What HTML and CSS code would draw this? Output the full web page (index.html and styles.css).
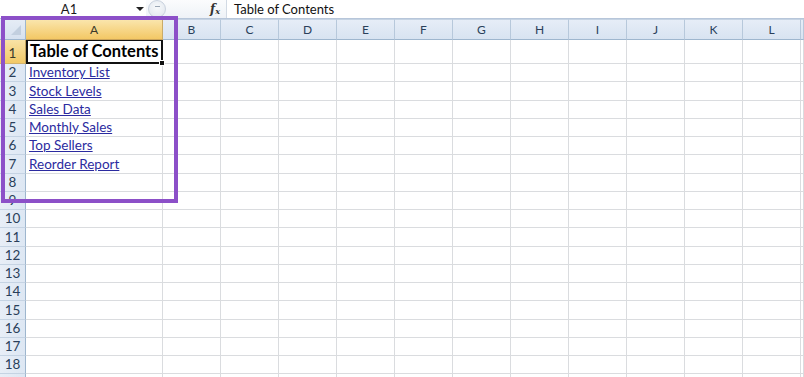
FILE: index.html
```html
<!DOCTYPE html>
<html>
<head>
<meta charset="utf-8">
<link rel="stylesheet" href="styles.css">
</head>
<body>
<div class="app">
  <div class="fbar">
    <div class="namebox"><span class="nm">A1</span><span class="drop"></span></div>
    <div class="fmid"><span class="knob"></span><span class="fx">f<sub>x</sub></span></div>
    <div class="finput">Table of Contents</div>
  </div>
  <div class="sheet">
    <div class="row hdr">
      <div class="rh corner"><span class="tri"></span></div>
      <div class="ch a sel">A</div><div class="ch">B</div><div class="ch">C</div><div class="ch">D</div><div class="ch">E</div><div class="ch">F</div><div class="ch">G</div><div class="ch">H</div><div class="ch">I</div><div class="ch">J</div><div class="ch">K</div><div class="ch">L</div><div class="ch rest"></div>
    </div>
    <div class="row r1">
      <div class="rh sel">1</div>
      <div class="c a active"><b class="title">Table of Contents</b><span class="handle"></span></div><div class="c"></div><div class="c"></div><div class="c"></div><div class="c"></div><div class="c"></div><div class="c"></div><div class="c"></div><div class="c"></div><div class="c"></div><div class="c"></div><div class="c"></div><div class="c rest"></div>
    </div>
    <div class="row"><div class="rh">2</div><div class="c a"><a class="lnk" href="#">Inventory List</a></div><div class="c"></div><div class="c"></div><div class="c"></div><div class="c"></div><div class="c"></div><div class="c"></div><div class="c"></div><div class="c"></div><div class="c"></div><div class="c"></div><div class="c"></div><div class="c rest"></div></div>
    <div class="row"><div class="rh">3</div><div class="c a"><a class="lnk" href="#">Stock Levels</a></div><div class="c"></div><div class="c"></div><div class="c"></div><div class="c"></div><div class="c"></div><div class="c"></div><div class="c"></div><div class="c"></div><div class="c"></div><div class="c"></div><div class="c"></div><div class="c rest"></div></div>
    <div class="row"><div class="rh">4</div><div class="c a"><a class="lnk" href="#">Sales Data</a></div><div class="c"></div><div class="c"></div><div class="c"></div><div class="c"></div><div class="c"></div><div class="c"></div><div class="c"></div><div class="c"></div><div class="c"></div><div class="c"></div><div class="c"></div><div class="c rest"></div></div>
    <div class="row"><div class="rh">5</div><div class="c a"><a class="lnk" href="#">Monthly Sales</a></div><div class="c"></div><div class="c"></div><div class="c"></div><div class="c"></div><div class="c"></div><div class="c"></div><div class="c"></div><div class="c"></div><div class="c"></div><div class="c"></div><div class="c"></div><div class="c rest"></div></div>
    <div class="row"><div class="rh">6</div><div class="c a"><a class="lnk" href="#">Top Sellers</a></div><div class="c"></div><div class="c"></div><div class="c"></div><div class="c"></div><div class="c"></div><div class="c"></div><div class="c"></div><div class="c"></div><div class="c"></div><div class="c"></div><div class="c"></div><div class="c rest"></div></div>
    <div class="row"><div class="rh">7</div><div class="c a"><a class="lnk" href="#">Reorder Report</a></div><div class="c"></div><div class="c"></div><div class="c"></div><div class="c"></div><div class="c"></div><div class="c"></div><div class="c"></div><div class="c"></div><div class="c"></div><div class="c"></div><div class="c"></div><div class="c rest"></div></div>
    <div class="row"><div class="rh">8</div><div class="c a"></div><div class="c"></div><div class="c"></div><div class="c"></div><div class="c"></div><div class="c"></div><div class="c"></div><div class="c"></div><div class="c"></div><div class="c"></div><div class="c"></div><div class="c"></div><div class="c rest"></div></div>
    <div class="row"><div class="rh">9</div><div class="c a"></div><div class="c"></div><div class="c"></div><div class="c"></div><div class="c"></div><div class="c"></div><div class="c"></div><div class="c"></div><div class="c"></div><div class="c"></div><div class="c"></div><div class="c"></div><div class="c rest"></div></div>
    <div class="row"><div class="rh">10</div><div class="c a"></div><div class="c"></div><div class="c"></div><div class="c"></div><div class="c"></div><div class="c"></div><div class="c"></div><div class="c"></div><div class="c"></div><div class="c"></div><div class="c"></div><div class="c"></div><div class="c rest"></div></div>
    <div class="row"><div class="rh">11</div><div class="c a"></div><div class="c"></div><div class="c"></div><div class="c"></div><div class="c"></div><div class="c"></div><div class="c"></div><div class="c"></div><div class="c"></div><div class="c"></div><div class="c"></div><div class="c"></div><div class="c rest"></div></div>
    <div class="row"><div class="rh">12</div><div class="c a"></div><div class="c"></div><div class="c"></div><div class="c"></div><div class="c"></div><div class="c"></div><div class="c"></div><div class="c"></div><div class="c"></div><div class="c"></div><div class="c"></div><div class="c"></div><div class="c rest"></div></div>
    <div class="row"><div class="rh">13</div><div class="c a"></div><div class="c"></div><div class="c"></div><div class="c"></div><div class="c"></div><div class="c"></div><div class="c"></div><div class="c"></div><div class="c"></div><div class="c"></div><div class="c"></div><div class="c"></div><div class="c rest"></div></div>
    <div class="row"><div class="rh">14</div><div class="c a"></div><div class="c"></div><div class="c"></div><div class="c"></div><div class="c"></div><div class="c"></div><div class="c"></div><div class="c"></div><div class="c"></div><div class="c"></div><div class="c"></div><div class="c"></div><div class="c rest"></div></div>
    <div class="row"><div class="rh">15</div><div class="c a"></div><div class="c"></div><div class="c"></div><div class="c"></div><div class="c"></div><div class="c"></div><div class="c"></div><div class="c"></div><div class="c"></div><div class="c"></div><div class="c"></div><div class="c"></div><div class="c rest"></div></div>
    <div class="row"><div class="rh">16</div><div class="c a"></div><div class="c"></div><div class="c"></div><div class="c"></div><div class="c"></div><div class="c"></div><div class="c"></div><div class="c"></div><div class="c"></div><div class="c"></div><div class="c"></div><div class="c"></div><div class="c rest"></div></div>
    <div class="row"><div class="rh">17</div><div class="c a"></div><div class="c"></div><div class="c"></div><div class="c"></div><div class="c"></div><div class="c"></div><div class="c"></div><div class="c"></div><div class="c"></div><div class="c"></div><div class="c"></div><div class="c"></div><div class="c rest"></div></div>
    <div class="row"><div class="rh">18</div><div class="c a"></div><div class="c"></div><div class="c"></div><div class="c"></div><div class="c"></div><div class="c"></div><div class="c"></div><div class="c"></div><div class="c"></div><div class="c"></div><div class="c"></div><div class="c"></div><div class="c rest"></div></div>
    <div class="row"><div class="rh"></div><div class="c a"></div><div class="c"></div><div class="c"></div><div class="c"></div><div class="c"></div><div class="c"></div><div class="c"></div><div class="c"></div><div class="c"></div><div class="c"></div><div class="c"></div><div class="c"></div><div class="c rest"></div></div>
  </div>
  <div class="highlight"></div>
</div>
</body>
</html>
```

FILE: styles.css
```css
* { box-sizing: border-box; }
html, body { margin: 0; padding: 0; background: #fff; }
body { width: 804px; height: 377px; overflow: hidden; font-family: Lato, "Open Sans", sans-serif; }
.app { position: relative; width: 804px; height: 377px; overflow: hidden; }

.fbar { display: flex; height: 19px; border-bottom: 1px solid #b7c6da; background: #fff; }
.namebox { width: 146px; display: flex; align-items: center; position: relative; }
.nm { flex: 1; text-align: center; font-size: 13px; color: #1b1b1b; padding-left: 2px; }
.drop { width: 0; height: 0; border-left: 4px solid transparent; border-right: 4px solid transparent; border-top: 4px solid #222; margin-right: 2px; }
.fmid { width: 80px; display: flex; align-items: center; justify-content: space-between; background: linear-gradient(#fbfcfd, #eef2f7); padding-right: 6px; }
.knob { width: 18px; height: 18px; margin-left: 2px; border-radius: 50%; border: 1px solid #c9d2de; background: radial-gradient(circle at 50% 40%, #f7f9fb, #dfe5ec); position: relative; }
.knob::after { content: ""; position: absolute; left: 6px; top: 5px; width: 5px; height: 2px; border-top: 1px solid #9aa6b4; }
.fx { font-family: "DejaVu Serif", serif; font-style: italic; font-weight: bold; font-size: 12px; color: #333; }
.fx sub { font-size: 8px; vertical-align: -1px; }
.finput { flex: 1; border-left: 1px solid #d2dae4; padding-left: 7px; font-size: 13px; line-height: 18px; color: #111; }

.sheet { display: flex; flex-direction: column; }
.row { display: flex; height: 18.25px; flex: none; }
.row.hdr { height: 21px; }
.row.r1 { height: 24px; }

.rh { width: 26px; flex: none; background: linear-gradient(90deg, #e8eef7, #dde7f3); border-right: 1px solid #9eb6ce; border-bottom: 1px solid #c5d3e3; font-size: 13.5px; color: #2a3f5a; display: flex; align-items: flex-end; justify-content: center; line-height: 17px; }
.rh.sel { background: linear-gradient(#f9e3a6, #f2c967); border-right-color: #c2a25c; border-bottom-color: #d3b46e; color: #3a3a2a; line-height: 20px; }
.rh.corner { background: linear-gradient(#e6edf6, #d6e1ef); border-bottom: 1px solid #9eb6ce; position: relative; }
.tri { position: absolute; right: 4px; bottom: 4px; width: 0; height: 0; border-left: 10px solid transparent; border-bottom: 10px solid #c2cfdf; }

.ch { width: 58px; flex: none; background: linear-gradient(#e6edf7, #d8e3f1); border-right: 1px solid #b7c8db; border-bottom: 1px solid #9eb6ce; border-top: 1px solid #c5d3e3; font-size: 12px; color: #2a3f5a; display: flex; align-items: center; justify-content: center; }
.ch.a { width: 137px; }
.ch.sel { background: linear-gradient(#fae5ac, #f3c865); border-right-color: #c9ab68; border-bottom-color: #c9a35a; color: #3a3a2a; }
.ch.rest, .c.rest { flex: 1; width: auto; }

.c { width: 58px; flex: none; border-right: 1px solid #dadcdf; border-bottom: 1px solid #dadcdf; }
.c.a { width: 137px; padding-left: 3px; display: flex; align-items: flex-end; font-size: 13.5px; line-height: 17px; }
.c.active { position: relative; border: 2px solid #111; border-top-width: 1px; padding-left: 2px; }
.title { font-size: 16.5px; font-weight: bold; color: #000; line-height: 21px; }
.handle { position: absolute; right: -4px; bottom: -4px; width: 6px; height: 6px; background: #111; border: 1px solid #fff; }
.lnk { color: #2b2ba0; text-decoration: underline; }

.highlight { position: absolute; left: 1px; top: 16px; width: 177px; height: 187px; border: 4px solid #8c50c8; pointer-events: none; }
```
